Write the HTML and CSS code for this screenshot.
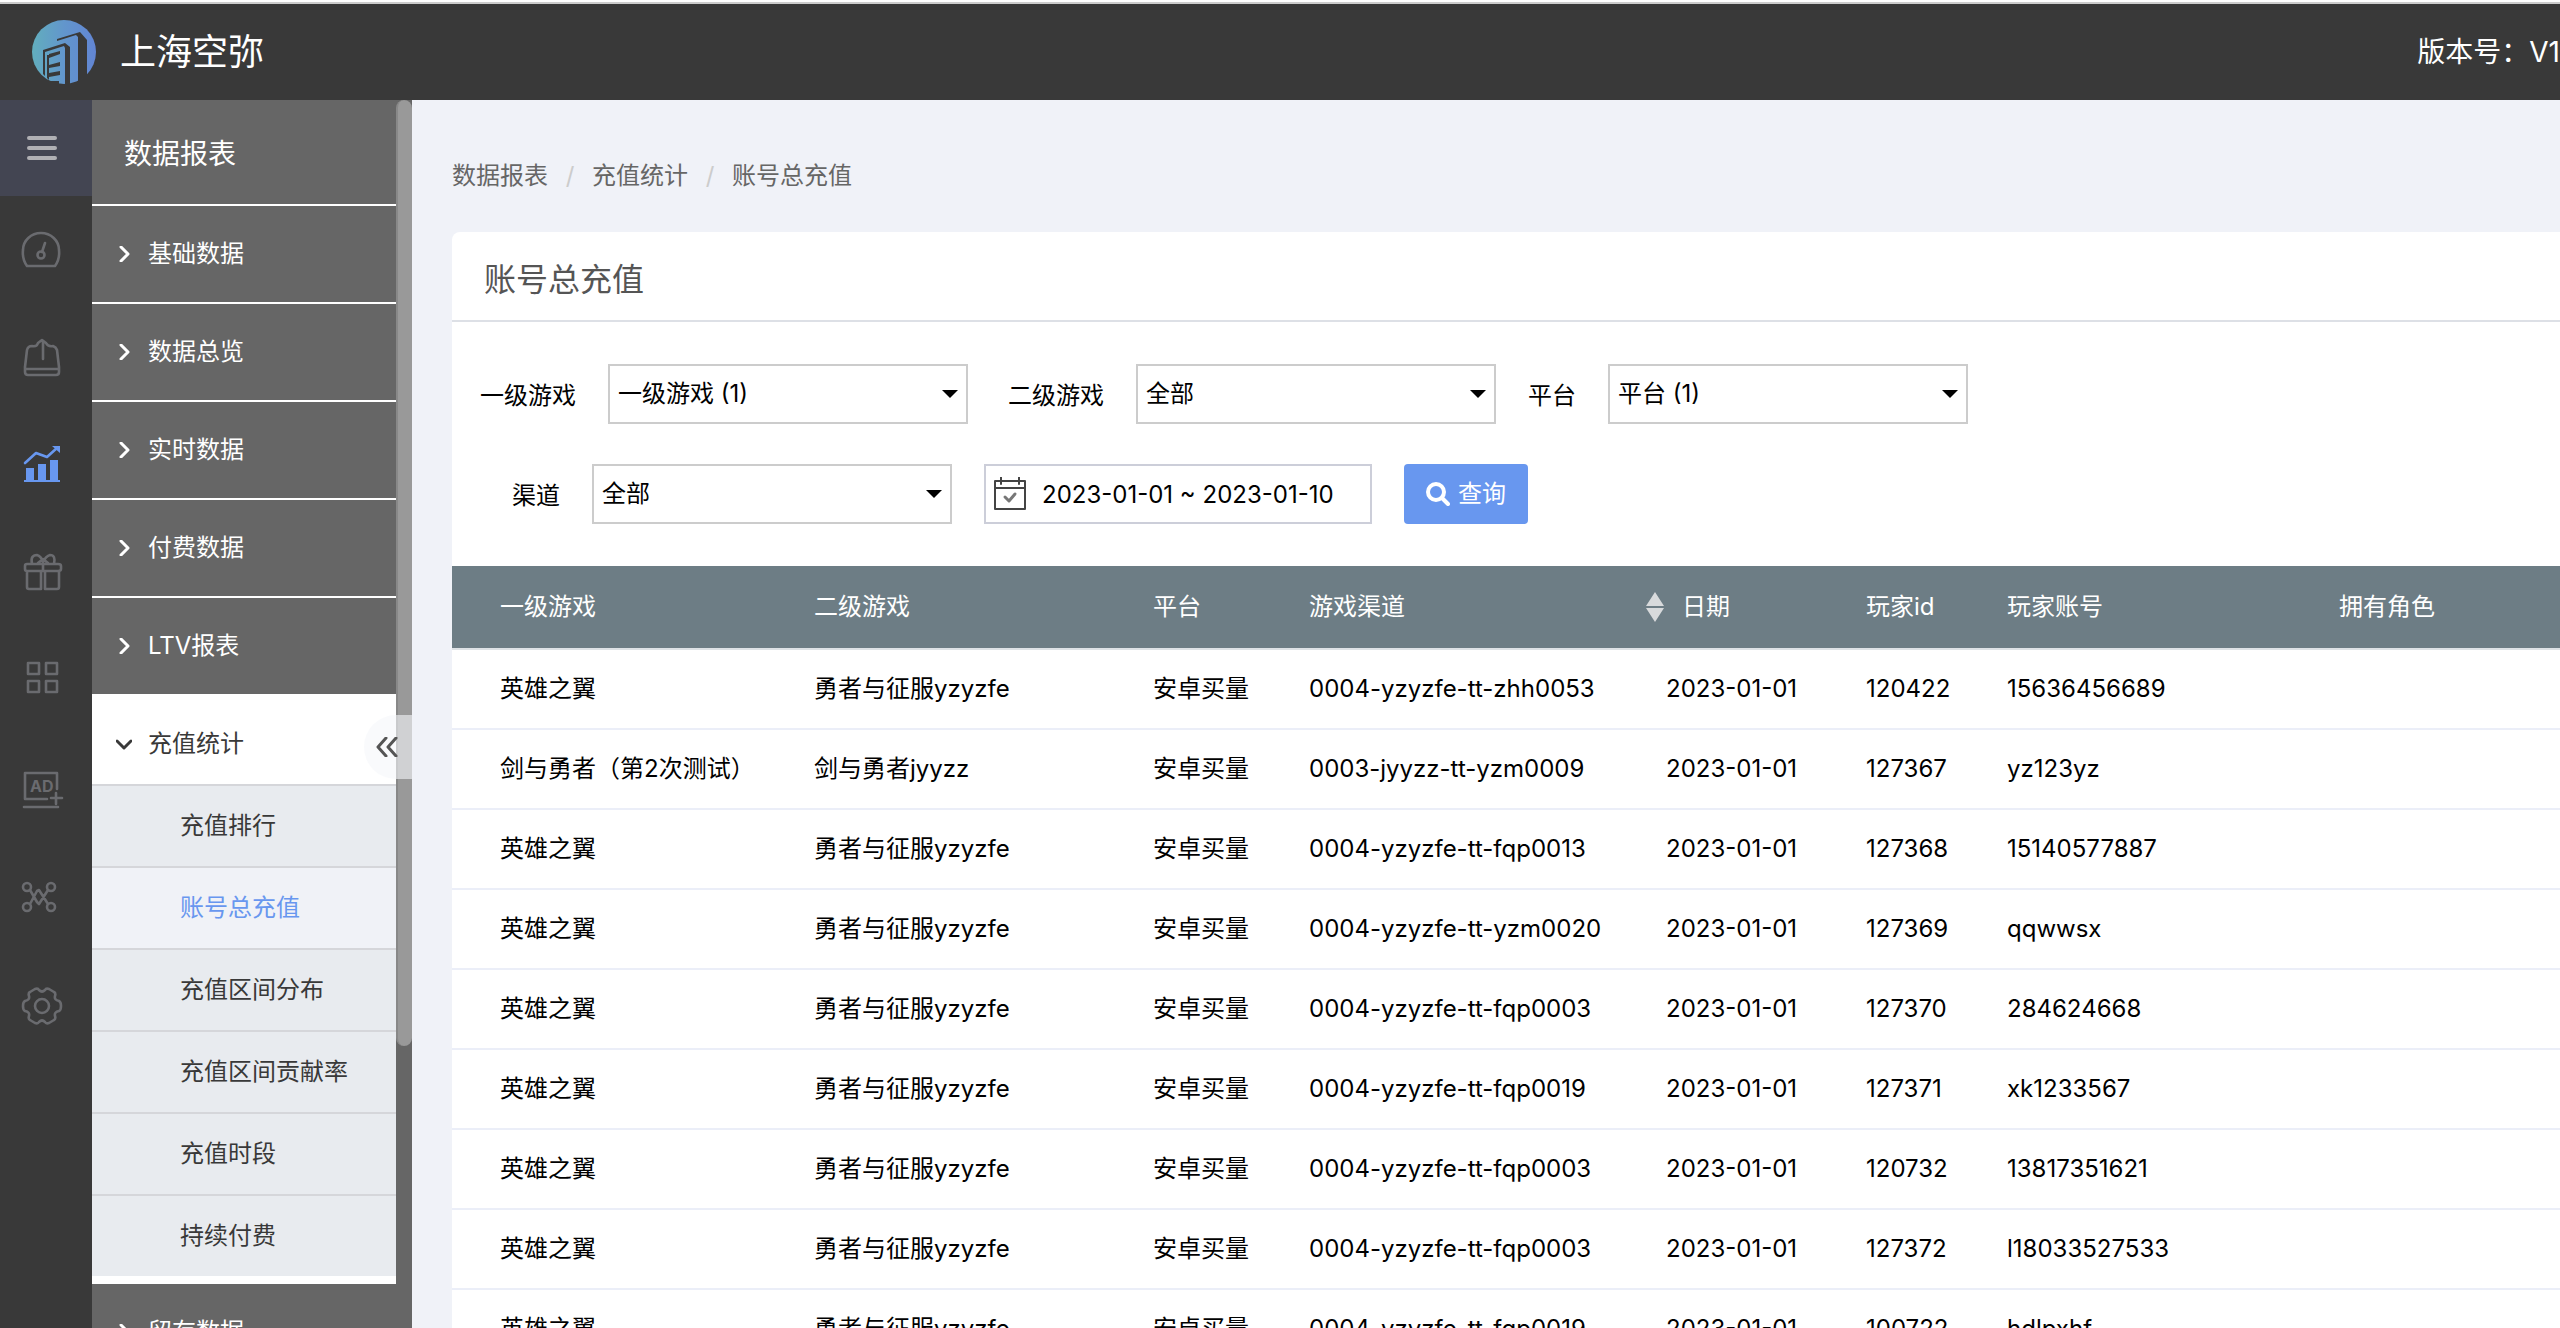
FILE: index.html
```html
<!DOCTYPE html>
<html lang="zh-CN">
<head>
<meta charset="utf-8">
<title>账号总充值</title>
<link rel="stylesheet" href="styles.css">
</head>
<body>
<header class="topbar">
  <a class="brand" href="#">
    <svg class="brand-logo" viewBox="0 0 64 64" aria-hidden="true">
      <defs>
        <linearGradient id="logo-fill" x1="0" y1="0" x2="1" y2="0">
          <stop offset="0" stop-color="#62aebd"/>
          <stop offset="0.5" stop-color="#6296cc"/>
          <stop offset="1" stop-color="#6285d4"/>
        </linearGradient>
      </defs>
      <circle cx="32" cy="32" r="32" fill="url(#logo-fill)"/>
      <path class="logo-cut" d="M11 30L33 23L38 27V64H33V28L32 26L13 32V56L11 54Z"/>
      <path class="logo-cut" d="M25 19L48 12L55 20V56L46 62V17L44 15L25 21Z"/>
      <path class="logo-cut" d="M17 34L28 31V34L17 38ZM17 45L28 42V46L17 48ZM17 53L28 51V55L17 57ZM15 35H17V60L15 58ZM18 61L27 61V66H18Z"/>
    </svg>
    <span>上海空弥</span>
  </a>
  <span class="version">版本号：V1</span>
</header>

<div class="shell">
  <nav class="rail" aria-label="主导航">
    <button class="rail-menu" type="button" aria-label="菜单">
      <svg width="30" height="24" viewBox="0 0 30 24"><path d="M2 2H28M2 12H28M2 22H28"/></svg>
    </button>
    <a class="rail-item" href="#" aria-label="仪表盘"><svg viewBox="0 0 40 40"><path d="M5 36H33Q38 29 37 20A18 17 0 0 0 1 20Q0 29 5 36ZM23 13L20 22"/><circle cx="19" cy="25" r="3.5"/></svg></a>
    <a class="rail-item" href="#" aria-label="发布"><svg viewBox="0 0 40 40"><path d="M3 29L5 12Q6 8 10 8Q15 9 16 5L20 2L24 5Q26 9 31 8Q34 9 35 12L37 29V34Q37 37 34 37H6Q3 37 3 34ZM3 31H37M21 4V21"/></svg></a>
    <a class="rail-item active" href="#" aria-label="数据报表"><svg viewBox="0 0 40 40"><path d="M3 17L14 7L25 11L35 2"/><path class="solid" d="M30 0H38V7ZM4 22H12V34H4ZM16 18H24V34H16ZM28 14H36V34H28ZM2 34H38V36H2Z"/></svg></a>
    <a class="rail-item" href="#" aria-label="礼包"><svg viewBox="0 0 40 40"><path d="M5 10H36Q39 10 39 12V15Q39 17 36 17H5Q3 17 3 15V12Q3 10 5 10ZM5 18V33Q5 35 7 35H19V18M37 18V33Q37 35 35 35H23V18M21 10V17M10 10Q8 1 15 1Q19 2 21 8Q24 2 28 1Q34 1 32 10M16 9L21 5L26 9"/></svg></a>
    <a class="rail-item" href="#" aria-label="应用"><svg viewBox="0 0 40 40"><path d="M6 1H17V12H6ZM24 1H35V12H24ZM6 19H17V30H6ZM24 19H35V30H24Z"/></svg></a>
    <a class="rail-item" href="#" aria-label="广告"><svg viewBox="0 0 40 40"><path d="M35 19V3H3V29H25M2 37H36M34 23V34M29 28H40"/><text x="8" y="22">AD</text></svg></a>
    <a class="rail-item" href="#" aria-label="渠道网络"><svg viewBox="0 0 40 40"><circle cx="5" cy="9" r="4"/><circle cx="29" cy="9" r="4"/><circle cx="5" cy="29" r="4"/><circle cx="29" cy="29" r="4"/><path d="M8 12L15 24L17 26L26 12M8 26L15 13L17 12L26 26"/></svg></a>
    <a class="rail-item" href="#" aria-label="设置"><svg viewBox="0 0 40 40"><circle cx="20" cy="20" r="7"/><path d="M13 3Q16 2 17 4Q20 7 23 4Q24 2 27 3L32 6Q34 7 33 10Q32 14 37 15Q39 16 39 20Q39 24 37 25Q32 26 33 30Q34 33 32 34L27 37Q24 38 23 36Q20 33 17 36Q16 38 13 37L8 34Q6 33 7 30Q8 26 3 25Q1 24 1 20Q1 16 3 15Q8 14 7 10Q6 7 8 6Z"/></svg></a>
  </nav>

  <aside class="sidebar">
    <div class="menu">
      <h2 class="menu-title">数据报表</h2>
      <a class="menu-group" href="#"><svg class="chevron" viewBox="0 0 16 16"><path d="M5 1L12 8L5 15"/></svg>基础数据</a>
      <a class="menu-group" href="#"><svg class="chevron" viewBox="0 0 16 16"><path d="M5 1L12 8L5 15"/></svg>数据总览</a>
      <a class="menu-group" href="#"><svg class="chevron" viewBox="0 0 16 16"><path d="M5 1L12 8L5 15"/></svg>实时数据</a>
      <a class="menu-group" href="#"><svg class="chevron" viewBox="0 0 16 16"><path d="M5 1L12 8L5 15"/></svg>付费数据</a>
      <a class="menu-group last" href="#"><svg class="chevron" viewBox="0 0 16 16"><path d="M5 1L12 8L5 15"/></svg>LTV报表</a>
      <div class="menu-open">
        <a class="menu-open-title" href="#"><svg class="chevron" viewBox="0 0 16 16"><path d="M1 5L8 12L15 5"/></svg>充值统计</a>
        <a class="menu-sub" href="#">充值排行</a>
        <a class="menu-sub current" href="#">账号总充值</a>
        <a class="menu-sub" href="#">充值区间分布</a>
        <a class="menu-sub" href="#">充值区间贡献率</a>
        <a class="menu-sub" href="#">充值时段</a>
        <a class="menu-sub" href="#">持续付费</a>
      </div>
      <a class="menu-group" href="#"><svg class="chevron" viewBox="0 0 16 16"><path d="M5 1L12 8L5 15"/></svg>留存数据</a>
    </div>
    <div class="scrollbar"><div class="scroll-thumb"></div></div>
    <button class="collapse" type="button" aria-label="收起菜单">
      <svg width="22" height="20" viewBox="0 0 22 20"><path d="M10 1L2 10L10 19M20 1L12 10L20 19"/></svg>
    </button>
  </aside>

  <main class="content">
    <nav class="breadcrumb" aria-label="面包屑">
      <a href="#">数据报表</a><span class="sep">/</span><a href="#">充值统计</a><span class="sep">/</span><a href="#">账号总充值</a>
    </nav>
    <section class="card">
      <h1 class="card-title">账号总充值</h1>
      <form class="filters">
        <div class="filter-row">
          <label for="game1">一级游戏</label>
          <div class="select"><select id="game1"><option>一级游戏 (1)</option></select></div>
          <label class="spaced" for="game2">二级游戏</label>
          <div class="select"><select id="game2"><option>全部</option></select></div>
          <label for="platform">平台</label>
          <div class="select"><select id="platform"><option>平台 (1)</option></select></div>
        </div>
        <div class="filter-row indented">
          <label for="channel">渠道</label>
          <div class="select"><select id="channel"><option>全部</option></select></div>
          <div class="date">
            <svg width="32" height="34" viewBox="0 0 32 34" aria-hidden="true"><path d="M1 4H31V32H1ZM1 11H31M7 0V7M25 0V7"/><path class="tick" d="M11 20L15 24L21 17"/></svg>
            <input type="text" aria-label="日期范围" value="2023-01-01 ~ 2023-01-10">
          </div>
          <button class="search" type="button">
            <svg width="24" height="24" viewBox="0 0 24 24" aria-hidden="true"><circle cx="10" cy="10" r="8"/><path d="M16 16L22 22"/></svg>查询
          </button>
        </div>
      </form>
      <table class="data">
        <colgroup><col class="c-game1"><col class="c-game2"><col class="c-platform"><col class="c-channel"><col class="c-date"><col class="c-id"><col class="c-account"><col></colgroup>
        <thead>
          <tr><th>一级游戏</th><th>二级游戏</th><th>平台</th><th>游戏渠道</th><th class="sortable"><div class="sort"><svg width="18" height="30" viewBox="0 0 18 30" aria-hidden="true"><path d="M9 0L18 14H0ZM9 30L18 16H0Z"/></svg>日期</div></th><th>玩家id</th><th>玩家账号</th><th>拥有角色</th></tr>
        </thead>
        <tbody>
          <tr><td>英雄之翼</td><td>勇者与征服yzyzfe</td><td>安卓买量</td><td>0004-yzyzfe-tt-zhh0053</td><td>2023-01-01</td><td>120422</td><td>15636456689</td><td></td></tr>
          <tr><td>剑与勇者（第2次测试）</td><td>剑与勇者jyyzz</td><td>安卓买量</td><td>0003-jyyzz-tt-yzm0009</td><td>2023-01-01</td><td>127367</td><td>yz123yz</td><td></td></tr>
          <tr><td>英雄之翼</td><td>勇者与征服yzyzfe</td><td>安卓买量</td><td>0004-yzyzfe-tt-fqp0013</td><td>2023-01-01</td><td>127368</td><td>15140577887</td><td></td></tr>
          <tr><td>英雄之翼</td><td>勇者与征服yzyzfe</td><td>安卓买量</td><td>0004-yzyzfe-tt-yzm0020</td><td>2023-01-01</td><td>127369</td><td>qqwwsx</td><td></td></tr>
          <tr><td>英雄之翼</td><td>勇者与征服yzyzfe</td><td>安卓买量</td><td>0004-yzyzfe-tt-fqp0003</td><td>2023-01-01</td><td>127370</td><td>284624668</td><td></td></tr>
          <tr><td>英雄之翼</td><td>勇者与征服yzyzfe</td><td>安卓买量</td><td>0004-yzyzfe-tt-fqp0019</td><td>2023-01-01</td><td>127371</td><td>xk1233567</td><td></td></tr>
          <tr><td>英雄之翼</td><td>勇者与征服yzyzfe</td><td>安卓买量</td><td>0004-yzyzfe-tt-fqp0003</td><td>2023-01-01</td><td>120732</td><td>13817351621</td><td></td></tr>
          <tr><td>英雄之翼</td><td>勇者与征服yzyzfe</td><td>安卓买量</td><td>0004-yzyzfe-tt-fqp0003</td><td>2023-01-01</td><td>127372</td><td>l18033527533</td><td></td></tr>
          <tr><td>英雄之翼</td><td>勇者与征服yzyzfe</td><td>安卓买量</td><td>0004-yzyzfe-tt-fqp0019</td><td>2023-01-01</td><td>100722</td><td>hdlpxhf</td><td></td></tr>
        </tbody>
      </table>
    </section>
  </main>
</div>
</body>
</html>
```
FILE: styles.css
```css
* { box-sizing: border-box; }

body {
  margin: 0;
  height: 100vh;
  display: flex;
  flex-direction: column;
  overflow: hidden;
  background: #f0f2f8;
  border-top: 2px solid #fff;
  color: #000;
  font: 24px/32px Inter, "Noto Sans CJK SC", sans-serif;
}

a { color: inherit; text-decoration: none; }
h1, h2 { margin: 0; font-weight: 400; }
svg { display: block; flex: none; fill: none; stroke-linecap: round; stroke-linejoin: round; }
button { border: 0; padding: 0; font: inherit; cursor: pointer; }

/* Top bar */
.topbar {
  flex: none;
  height: 98px;
  display: flex;
  align-items: center;
  justify-content: space-between;
  padding-left: 32px;
  background: #393939;
  border-top: 2px solid #ccc;
  color: #fff;
}
.brand { display: flex; align-items: center; gap: 24px; font-size: 36px; line-height: 48px; }
.brand-logo { width: 64px; height: 64px; }
.logo-cut { fill: #393939; }
.version { font-size: 28px; line-height: 40px; }

.shell { flex: 1; min-height: 0; display: flex; }

/* Icon rail */
.rail { flex: none; width: 92px; background: #393939; }
.rail-menu {
  width: 100%;
  height: 96px;
  display: flex;
  align-items: center;
  justify-content: center;
  padding-right: 8px;
  background: #434552;
}
.rail-menu path { stroke: #b0b0b4; stroke-width: 4; }
.rail-item {
  height: 108px;
  display: flex;
  align-items: center;
  justify-content: center;
  padding-right: 8px;
  color: #6a6b6f;
}
.rail-item svg { width: 40px; height: 40px; stroke: currentColor; stroke-width: 2.6; overflow: visible; }
.rail-item text { font: 700 16px Inter, sans-serif; fill: currentColor; stroke: none; }
.rail-item .solid { fill: currentColor; stroke: none; }
.rail-item.active { color: #6897ef; }

/* Section menu */
.sidebar { position: relative; flex: none; width: 320px; display: flex; overflow: hidden; background: #666; }
.menu { flex: 1; color: #fff; }
.menu-title {
  height: 106px;
  padding: 38px 32px 34px;
  border-bottom: 2px solid #fff;
  font-size: 28px;
  line-height: 32px;
}
.menu-group, .menu-open-title { display: flex; align-items: center; gap: 16px; padding-left: 24px; }
.menu-group { height: 98px; border-bottom: 2px solid #fff; }
.menu-group.last { height: 96px; border-bottom: 0; }
.chevron { width: 16px; height: 16px; stroke: currentColor; stroke-width: 3; }
.menu-open { padding: 8px 0; background: #fff; color: #393939; }
.menu-open-title { height: 82px; padding-top: 2px; }
.menu-sub {
  display: flex;
  align-items: center;
  height: 82px;
  padding-left: 88px;
  border-top: 2px solid #d5d6da;
  background: #e8ebef;
}
.menu-sub.current { background: #f0f2f7; color: #6897ef; }
.scrollbar { flex: none; width: 16px; background: #666; }
.scroll-thumb { height: 77%; border-left: 2px solid #888; border-radius: 8px; background: #999; }
.collapse {
  position: absolute;
  top: 615px;
  right: 0;
  width: 48px;
  height: 64px;
  padding-left: 12px;
  border-radius: 32px 0 0 32px;
  background: rgba(245, 246, 250, 0.6);
}
.collapse path { stroke: #555; stroke-width: 3; }

/* Content */
.content { flex: 1; min-width: 0; overflow: hidden; padding-left: 40px; }
.breadcrumb { display: flex; height: 132px; padding-top: 60px; color: #666; }
.sep { width: 44px; text-align: center; color: #ccc; }
.card { background: #fff; border-top-left-radius: 8px; }
.card-title {
  height: 90px;
  padding: 24px 32px;
  border-bottom: 2px solid #dde0e6;
  color: #555;
  font-size: 32px;
  line-height: 48px;
}
.filters { display: flex; flex-direction: column; gap: 40px; padding: 42px 28px; }
.filter-row { display: flex; align-items: center; gap: 32px; }
.filter-row label { padding-top: 4px; }
.filter-row.indented { padding-left: 32px; }
.filter-row .spaced { margin-left: 8px; }
.select { position: relative; width: 360px; }
.select::after {
  content: "";
  position: absolute;
  top: 26px;
  right: 10px;
  border: 8px solid transparent;
  border-top-color: #000;
  border-bottom: 0;
  pointer-events: none;
}
.select select {
  display: block;
  width: 100%;
  height: 60px;
  padding: 0 32px 0 8px;
  appearance: none;
  border: 2px solid #ccc;
  border-radius: 0;
  background: #fff;
  color: #000;
  font: inherit;
}
.date {
  width: 388px;
  height: 60px;
  display: flex;
  align-items: center;
  gap: 16px;
  padding: 0 8px;
  border: 2px solid #ccced9;
}
.date svg { stroke: #444; stroke-width: 2; }
.date .tick { stroke: #777; stroke-width: 3; }
.date input { flex: 1; min-width: 0; padding: 2px 0 0; border: 0; background: none; color: #000; font: inherit; }
.search {
  display: flex;
  align-items: center;
  justify-content: center;
  gap: 8px;
  width: 124px;
  height: 60px;
  border-radius: 4px;
  background: #6897ef;
  color: #fff;
}
.search svg { stroke: #fff; stroke-width: 4; }

/* Data table */
.data { width: 100%; table-layout: fixed; border-collapse: separate; border-spacing: 0; }
.data th, .data td { height: 80px; padding: 0 0 0 20px; text-align: left; font-weight: 400; white-space: nowrap; }
.data th:first-child, .data td:first-child { padding-left: 48px; }
.data th { height: 84px; background: #6d7d85; border-bottom: 2px solid #dee2e6; color: #fff; }
.data td { border-bottom: 2px solid #ebeef8; }
.data th.sortable { padding-left: 0; }
.sort { display: flex; align-items: center; gap: 18px; }
.sort path { fill: #d8dadc; }
.c-game1 { width: 342px; }
.c-game2 { width: 339px; }
.c-platform { width: 156px; }
.c-channel { width: 357px; }
.c-date { width: 200px; }
.c-id { width: 141px; }
.c-account { width: 332px; }
```
